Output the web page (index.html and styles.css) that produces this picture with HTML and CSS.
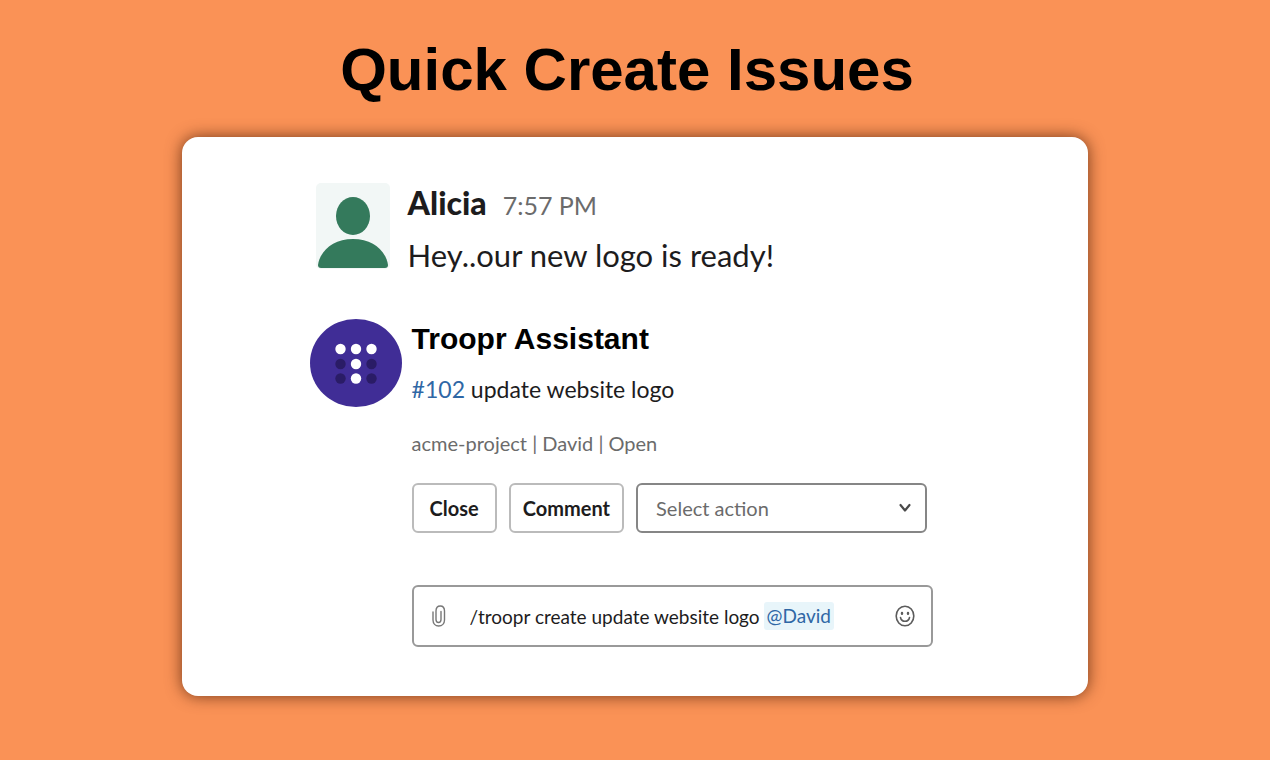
FILE: index.html
```
<!DOCTYPE html>
<html lang="en">
<head>
  <meta charset="UTF-8">
  <meta name="viewport" content="width=device-width, initial-scale=1.0">
  <title>Quick Create Issues</title>
  <link rel="stylesheet" href="styles.css">
</head>
<body>

  <h1>Quick Create Issues</h1>

  <main class="card">
    <!-- Message from a teammate -->
    <article class="message">
      <svg class="avatar" viewBox="0 0 74 86" aria-hidden="true">
        <rect width="74" height="86" rx="5" fill="#f2f7f6"/>
        <ellipse cx="37" cy="33" rx="17" ry="19" fill="#347a5c"/>
        <path d="M2 82C4 68 17 56 37 56s33 12 35 26q0 3-3 3H5q-3 0-3-3z" fill="#347a5c"/>
      </svg>
      <div class="body">
        <div class="author">
          <span class="name">Alicia</span>
          <time class="time">7:57 PM</time>
        </div>
        <p class="text">Hey..our new logo is ready!</p>
      </div>
    </article>

    <!-- Reply from the bot with the created issue -->
    <article class="message bot">
      <svg class="bot-avatar" viewBox="0 0 92 88" aria-hidden="true">
        <ellipse cx="46" cy="44" rx="46" ry="44" fill="#402d96"/>
        <g fill="#fff">
          <circle cx="30.500" cy="30" r="5.200"/>
          <circle cx="46" cy="30" r="5.200"/>
          <circle cx="61.500" cy="30" r="5.200"/>
          <circle cx="46" cy="45" r="5.200"/>
          <circle cx="46" cy="59.500" r="5.200"/>
        </g>
        <g fill="#2a1c66">
          <circle cx="30.500" cy="45" r="5.200"/>
          <circle cx="61.500" cy="45" r="5.200"/>
          <circle cx="30.500" cy="59.500" r="5.200"/>
          <circle cx="61.500" cy="59.500" r="5.200"/>
        </g>
      </svg>
      <div class="body">
        <h2 class="bot-name">Troopr Assistant</h2>
        <p class="issue"><a href="#102">#102</a> update website logo</p>
        <p class="meta">acme-project | David | Open</p>
        <div class="actions">
          <button type="button">Close</button>
          <button type="button">Comment</button>
          <div class="select">
            <select aria-label="Select action">
              <option>Select action</option>
            </select>
            <svg class="chevron" viewBox="0 0 12 10" aria-hidden="true">
              <path d="M1.500 2L6 7.500 10.500 2" fill="none" stroke="#4a4a4a" stroke-width="2.200" stroke-linecap="round" stroke-linejoin="round"/>
            </svg>
          </div>
        </div>
        <form class="composer">
          <button type="button" class="icon" aria-label="Attach file">
            <svg width="14" height="22" viewBox="0 0 14 22" fill="none" stroke="#777" stroke-width="1.400" stroke-linecap="round">
              <path d="M1 7v8c0 3.500 2.300 6 5.700 6S12.500 18.500 12.500 15V6c0-3-1.700-5-4.200-5S4 3 4 6v8.500c0 2 1 3 2.500 3S9 16.500 9 14.500V6.500"/>
            </svg>
          </button>
          <input type="text" aria-label="Message" value="/troopr create update website logo">
          <a class="mention" href="#david">@David</a>
          <button type="button" class="icon emoji" aria-label="Insert emoji">
            <svg width="20" height="22" viewBox="0 0 20 22" fill="none" stroke="#5c5c5c" stroke-width="1.600" stroke-linecap="round">
              <ellipse cx="10" cy="11" rx="8.800" ry="9.800"/>
              <path d="M5.500 12.500C6 15 7.800 16.300 10 16.300s4-1.300 4.500-3.800"/>
              <path d="M7 8v.8M13 8v.8" stroke-width="2.400"/>
            </svg>
          </button>
        </form>
      </div>
    </article>
  </main>

</body>
</html>
```
FILE: styles.css
```
* {
  box-sizing: border-box;
}

body {
  font-family: Lato, sans-serif;
  background-color: #fa9256;
  color: #1d1c1d;
  margin: 0;
  padding: 34px 0 64px;
}

h1,
h2,
p {
  margin: 0;
}

h1 {
  font-family: "Liberation Sans", Arial, sans-serif;
  font-size: 60px;
  line-height: 71px;
  text-align: center;
  color: #000;
  padding-right: 16px;
}

.card {
  width: 71.4%;
  margin: 32px auto 0;
  padding: 46px 128px 49px;
  background-color: #fff;
  border-radius: 16px;
  box-shadow: 0 0 16px rgba(60, 20, 0, 0.7);
}

.message {
  display: grid;
  grid-template-columns: 92px minmax(0, 1fr);
  column-gap: 10px;
}

.avatar {
  width: 74px;
  height: 86px;
  margin-left: 6px;
}

.author {
  display: flex;
  align-items: baseline;
  gap: 16px;
  line-height: 40px;
  margin-left: -4px;
}

.name {
  font-size: 32px;
  font-weight: 900;
}

.time {
  font-size: 25px;
  color: #6b6b6b;
}

.text {
  font-size: 31px;
  line-height: 60px;
  margin-left: -4px;
}

.bot {
  margin-top: 34px;
}

.bot-avatar {
  width: 92px;
  height: 88px;
}

.bot-name {
  font-family: "Liberation Sans", Arial, sans-serif;
  font-size: 30px;
  line-height: 40px;
  color: #000;
}

.issue {
  font-size: 23px;
  line-height: 60px;
}

.issue a,
.mention {
  color: #2f67a5;
  text-decoration: none;
}

.meta {
  font-size: 20px;
  line-height: 48px;
  color: #6b6b6b;
}

.actions {
  display: flex;
  gap: 12px;
  margin-top: 16px;
}

.actions button {
  height: 50px;
  padding: 0 16px;
  font: 700 20px Lato, sans-serif;
  color: #1d1c1d;
  background-color: #fff;
  border: 2px solid #bbb;
  border-radius: 6px;
}

.actions button + button {
  padding: 0 12px;
}

.select {
  position: relative;
  flex: 0 1 291px;
}

.select select {
  width: 100%;
  height: 50px;
  padding: 0 18px;
  appearance: none;
  font: 20px Lato, sans-serif;
  color: #6b6b6b;
  background-color: #fff;
  border: 2px solid #868686;
  border-radius: 6px;
}

.chevron {
  position: absolute;
  right: 16px;
  top: 20px;
  width: 12px;
  height: 10px;
  pointer-events: none;
}

.composer {
  display: flex;
  align-items: center;
  max-width: 521px;
  height: 62px;
  margin-top: 52px;
  padding: 0 16px 0 18px;
  border: 2px solid #999;
  border-radius: 6px;
}

.composer input {
  field-sizing: content;
  margin-left: 24px;
  padding: 0;
  border: 0;
  outline: 0;
  font: 19px Lato, sans-serif;
  color: #1d1c1d;
}

.mention {
  margin-left: 4px;
  padding: 0 3px;
  font-size: 19px;
  line-height: 28px;
  background-color: #e8f5fa;
  border-radius: 3px;
}

.icon {
  display: flex;
  padding: 0;
  border: 0;
  background: none;
}

.emoji {
  margin-left: auto;
}
```
